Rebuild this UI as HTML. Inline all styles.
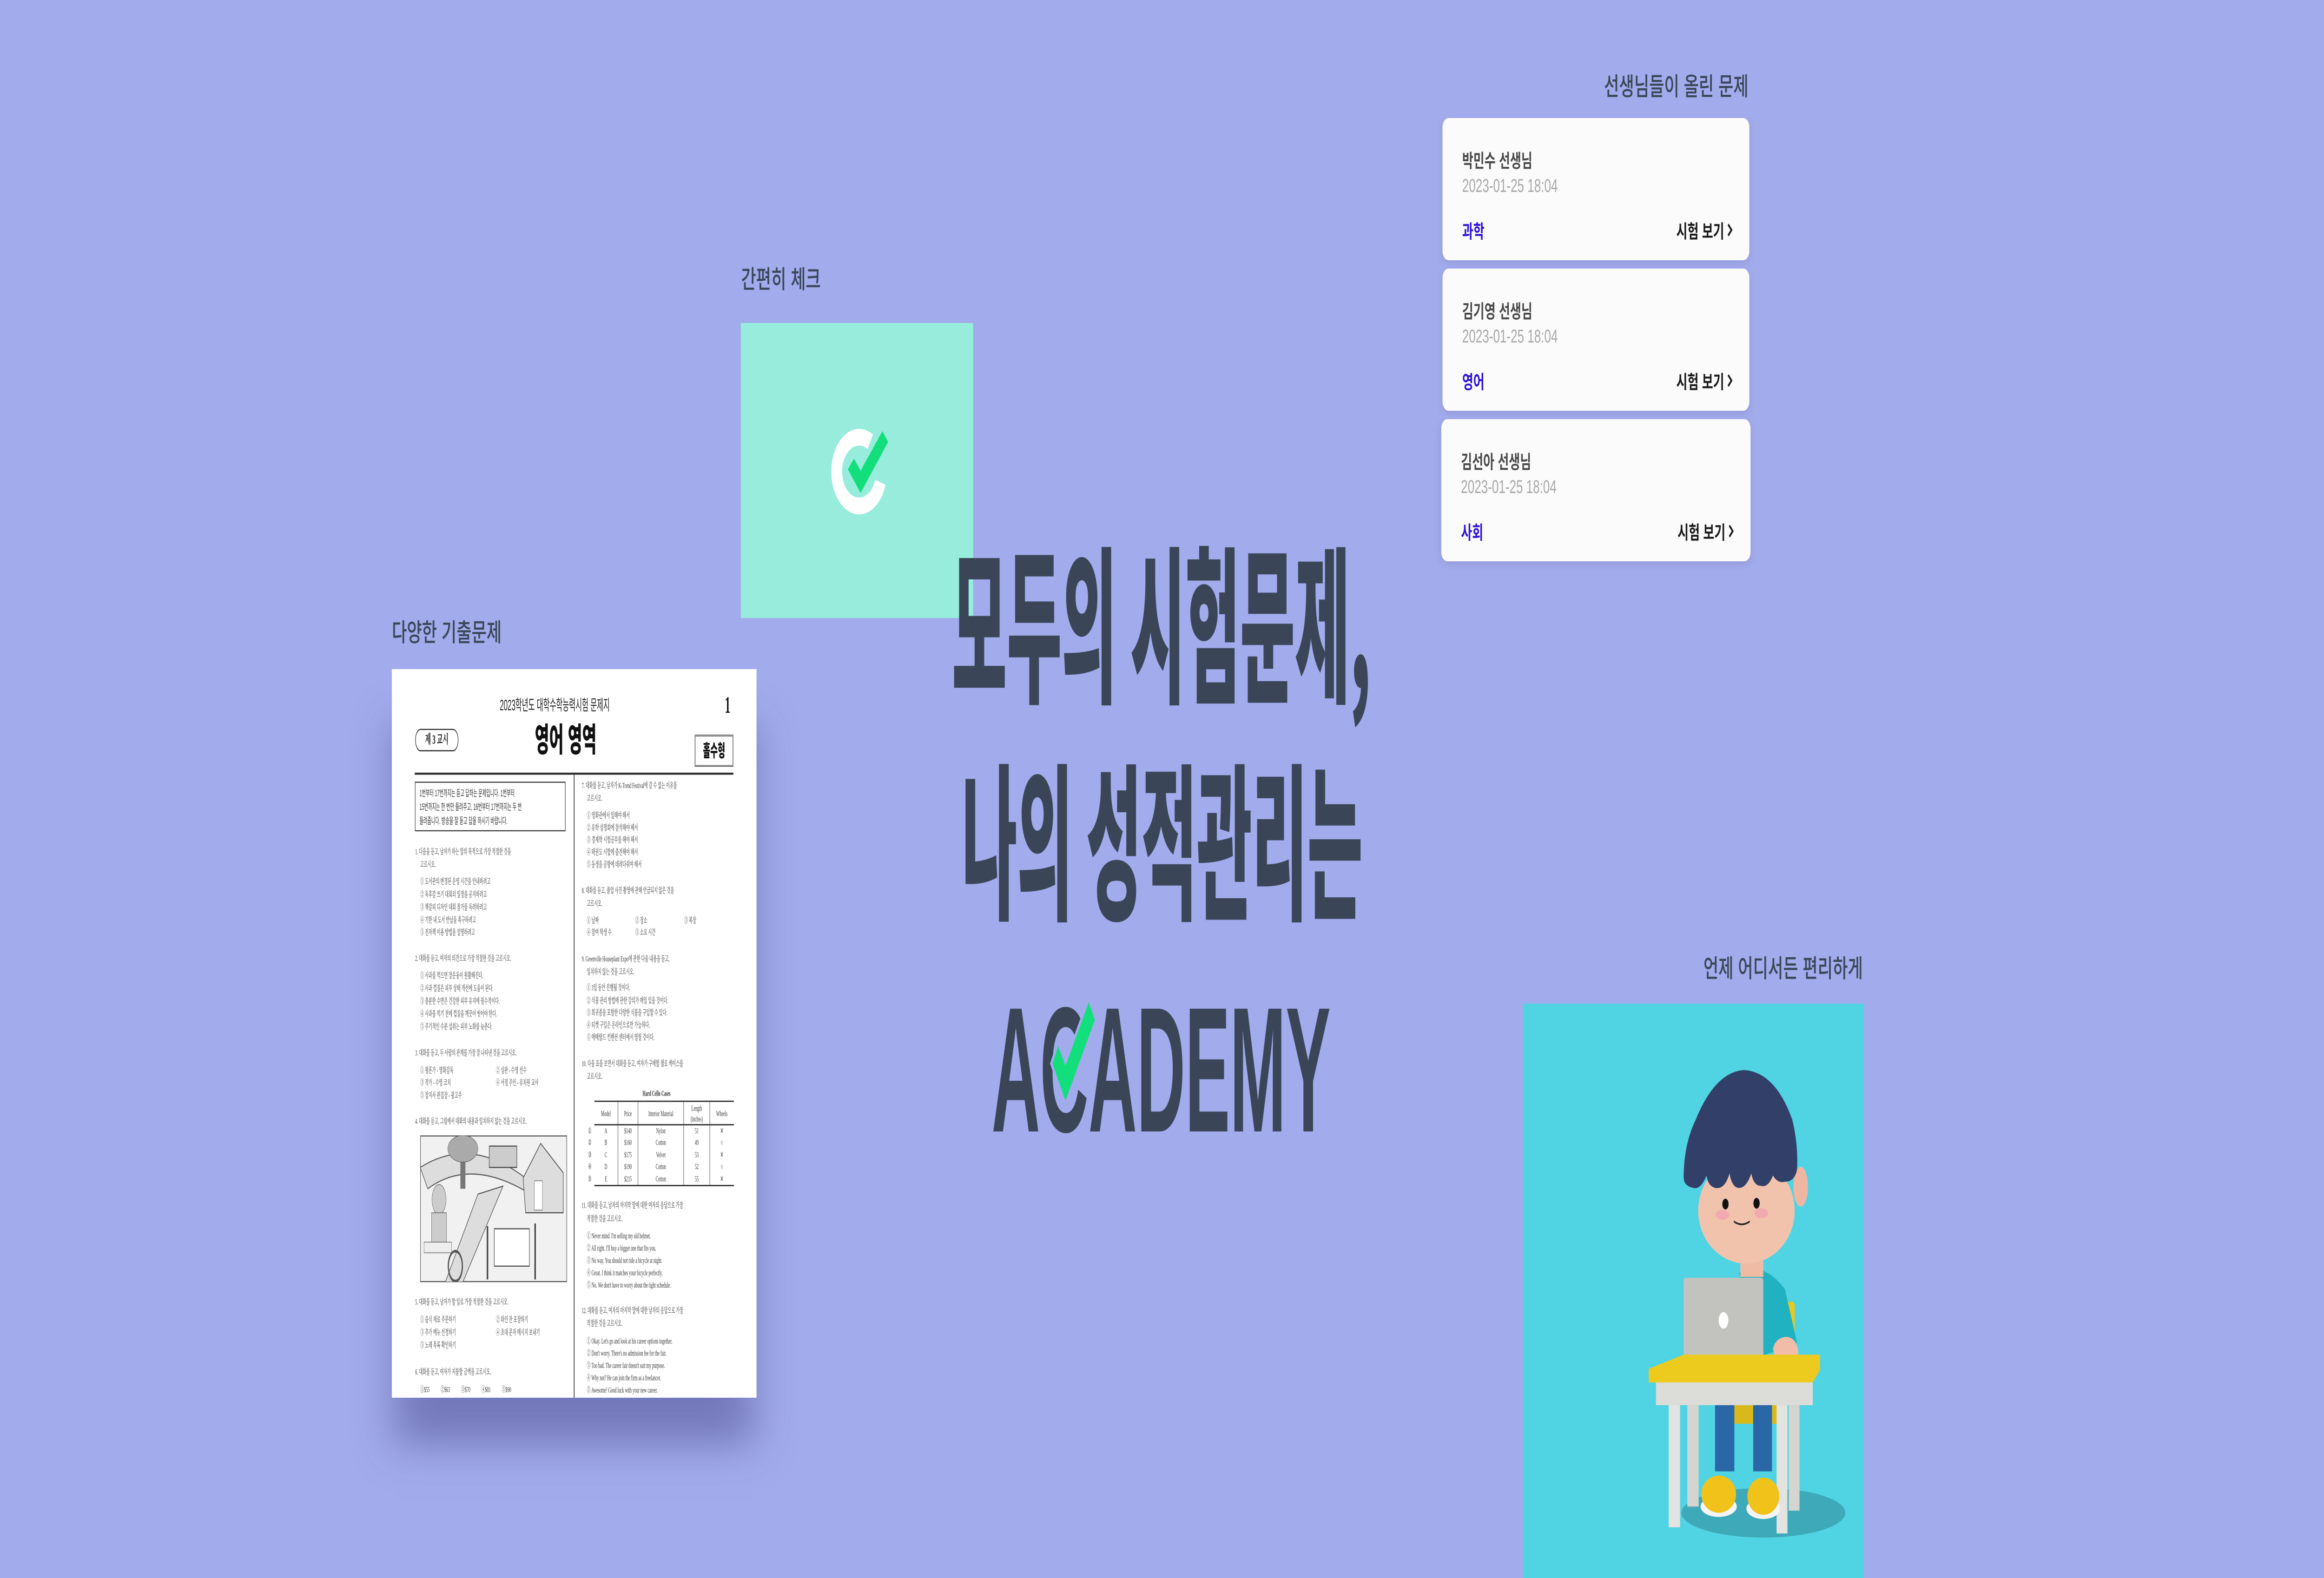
<!DOCTYPE html>
<html><head><meta charset="utf-8">
<style>
*{margin:0;padding:0;box-sizing:border-box}
html,body{width:100%;height:100%;overflow:hidden;background:#a2abeb}
#wrap{position:absolute;left:0;top:0;width:7680px;height:3396px;transform-origin:0 0;overflow:hidden;background:#a2abeb;font-family:"Liberation Sans","Noto Sans CJK KR",sans-serif}
.lbl{position:absolute;color:#3a4658;font-size:54px;font-weight:500;white-space:nowrap;line-height:1}
.card{position:absolute;left:4767px;width:1014px;height:306px;background:#fbfbfb;border-radius:20px;box-shadow:0 6px 18px rgba(90,90,150,.18)}
.card .n{position:absolute;left:65px;top:60px;font-size:40px;font-weight:700;color:#4a4a4a}
.card .d{position:absolute;left:65px;top:124px;font-size:40px;color:#a8a8a8}
.card .s{position:absolute;left:65px;top:212px;font-size:40px;font-weight:700;color:#2e12d6}
.card .v{position:absolute;right:55px;top:212px;font-size:40px;font-weight:700;color:#1a1a1a;display:flex;align-items:center;gap:10px}
#paper{position:absolute;left:1295px;top:1440px;width:1205px;height:1568px;background:#fff;box-shadow:0 110px 100px -10px rgba(70,72,140,.5);overflow:hidden}
#pin{position:absolute;left:0;top:0;width:1568px;height:1568px;transform-origin:0 0;transform:scale(0.8292,1.1482) translate(-55px,-122px);font-family:"Liberation Serif","Noto Serif CJK SC",serif;color:#333}
#pin div{position:absolute;white-space:nowrap;font-size:15px;line-height:20px}
</style></head><body>
<div id="wrap">
<div class="lbl" style="left:2449px;top:575px">간편히 체크</div>
<div style="position:absolute;left:2448px;top:695px;width:768px;height:635px;background:#97ecdc"></div>

<div class="lbl" style="left:1295px;top:1335px">다양한 기출문제</div>
<div class="lbl" style="right:1902px;top:160px">선생님들이 올린 문제</div>
<div class="lbl" style="right:1524px;top:2058px">언제 어디서든 편리하게</div>

<div class="card" style="top:254px"><div class="n">박민수 선생님</div><div class="d">2023-01-25 18:04</div><div class="s">과학</div><div class="v">시험 보기<svg width="18" height="30" viewBox="0 0 18 30"><path d="M3 3L14 15L3 27" stroke="#1a1a1a" stroke-width="5" fill="none"/></svg></div></div>
<div class="card" style="top:578px"><div class="n">김기영 선생님</div><div class="d">2023-01-25 18:04</div><div class="s">영어</div><div class="v">시험 보기<svg width="18" height="30" viewBox="0 0 18 30"><path d="M3 3L14 15L3 27" stroke="#1a1a1a" stroke-width="5" fill="none"/></svg></div></div>
<div class="card" style="top:902px;left:4763px;width:1022px"><div class="n">김선아 선생님</div><div class="d">2023-01-25 18:04</div><div class="s">사회</div><div class="v">시험 보기<svg width="18" height="30" viewBox="0 0 18 30"><path d="M3 3L14 15L3 27" stroke="#1a1a1a" stroke-width="5" fill="none"/></svg></div></div>

<div id="paper"><div id="pin">
<div style="left:485px;top:172px;font-family:'Liberation Sans','Noto Sans CJK KR',sans-serif;font-size:28px;line-height:36px;color:#222">2023학년도 대학수학능력시험 문제지</div>
<div style="left:1382px;top:165px;font-size:44px;line-height:50px;font-weight:700;color:#111">1</div>
<div style="left:625px;top:220px;font-family:'Liberation Sans','Noto Sans CJK KR',sans-serif;font-size:62px;line-height:72px;font-weight:900;color:#111">영어 영역</div>
<div style="left:148px;top:234px;width:172px;height:42px;border:2px solid #222;border-radius:21px;font-size:24px;line-height:38px;text-align:center;font-weight:700;color:#111">제 3 교시</div>
<div style="left:1262px;top:245px;width:154px;height:60px;border:3px double #222;font-family:'Liberation Sans','Noto Sans CJK KR',sans-serif;font-size:32px;line-height:54px;text-align:center;font-weight:900;color:#111">홀수형</div>
<div style="left:146px;top:316px;width:1270px;height:4px;background:#333"></div>
<div style="left:780px;top:320px;width:3px;height:1170px;background:#333"></div>
<div style="left:147px;top:333px;width:600px;height:93px;border:2px solid #333"></div>
<div style="left:165px;top:342px;font-family:'Liberation Sans','Noto Sans CJK KR',sans-serif;font-size:17px;line-height:26px">1번부터 17번까지는 듣고 답하는 문제입니다. 1번부터<br>15번까지는 한 번만 들려주고, 16번부터 17번까지는 두 번<br>들려줍니다. 방송을 잘 듣고 답을 하시기 바랍니다.</div>

<div style="left:148px;top:455px">1. 다음을 듣고, 남자가 하는 말의 목적으로 가장 적절한 것을</div>
<div style="left:168px;top:479px">고르시오.</div>
<div style="left:168px;top:511px">① 도서관의 변경된 운영 시간을 안내하려고</div>
<div style="left:168px;top:535px">② 독후감 쓰기 대회의 일정을 공지하려고</div>
<div style="left:168px;top:559px">③ 책갈피 디자인 대회 참가를 독려하려고</div>
<div style="left:168px;top:583px">④ 기한 내 도서 반납을 촉구하려고</div>
<div style="left:168px;top:606px">⑤ 전자책 이용 방법을 설명하려고</div>
<div style="left:148px;top:655px">2. 대화를 듣고, 여자의 의견으로 가장 적절한 것을 고르시오.</div>
<div style="left:168px;top:687px">① 사과를 먹으면 장운동이 원활해진다.</div>
<div style="left:168px;top:711px">② 사과 껍질은 피부 상태 개선에 도움이 된다.</div>
<div style="left:168px;top:735px">③ 충분한 수면은 건강한 피부 유지에 필수적이다.</div>
<div style="left:168px;top:759px">④ 사과를 먹기 전에 껍질을 깨끗이 씻어야 한다.</div>
<div style="left:168px;top:783px">⑤ 주기적인 수분 섭취는 피부 노화를 늦춘다.</div>
<div style="left:148px;top:832px">3. 대화를 듣고, 두 사람의 관계를 가장 잘 나타낸 것을 고르시오.</div>
<div style="left:168px;top:865px">① 평론가 - 영화감독</div><div style="left:470px;top:865px">② 심판 - 수영 선수</div>
<div style="left:168px;top:888px">③ 작가 - 수영 코치</div><div style="left:470px;top:888px">④ 서점 주인 - 유치원 교사</div>
<div style="left:168px;top:912px">⑤ 잡지사 편집장 - 광고주</div>
<div style="left:148px;top:960px">4. 대화를 듣고, 그림에서 대화의 내용과 일치하지 않는 것을 고르시오.</div>
<div style="left:168px;top:996px;width:585px;height:275px;border:2px solid #555;background:#f1f1f1"></div>
<svg style="position:absolute;left:168px;top:996px" width="585" height="275" viewBox="0 0 585 275">
<path d="M0 60 Q200 0 420 80 L440 110 Q200 40 30 100 Z" fill="#ddd" stroke="#555" stroke-width="2"/>
<path d="M100 275 L230 110 L330 95 L170 275 Z" fill="#ddd" stroke="#555" stroke-width="2"/>
<rect x="160" y="20" width="20" height="80" fill="#777"/><ellipse cx="170" cy="25" rx="60" ry="25" fill="#aaa" stroke="#555"/>
<rect x="275" y="20" width="110" height="40" fill="#ccc" stroke="#444" stroke-width="2"/>
<path d="M410 80 L480 15 L570 70 L570 145 L420 145 Z" fill="#ddd" stroke="#444" stroke-width="2"/>
<rect x="455" y="85" width="32" height="55" fill="#fff" stroke="#444"/>
<circle cx="75" cy="120" r="28" fill="#ccc" stroke="#444"/><rect x="45" y="145" width="60" height="70" fill="#ccc" stroke="#444"/>
<rect x="15" y="200" width="110" height="20" fill="#eee" stroke="#444"/>
<rect x="295" y="175" width="140" height="70" fill="#fff" stroke="#444" stroke-width="2"/>
<rect x="265" y="170" width="6" height="100" fill="#444"/><rect x="455" y="165" width="6" height="105" fill="#444"/>
<circle cx="140" cy="245" r="28" fill="none" stroke="#555" stroke-width="5"/>
</svg>
<div style="left:148px;top:1299px">5. 대화를 듣고, 남자가 할 일로 가장 적절한 것을 고르시오.</div>
<div style="left:168px;top:1332px">① 음식 재료 주문하기</div><div style="left:470px;top:1332px">② 와인 잔 포장하기</div>
<div style="left:168px;top:1356px">③ 추가 메뉴 선정하기</div><div style="left:470px;top:1356px">④ 초대 문자 메시지 보내기</div>
<div style="left:168px;top:1380px">⑤ 노래 목록 확인하기</div>
<div style="left:148px;top:1430px">6. 대화를 듣고, 여자가 지불할 금액을 고르시오.</div>
<div style="left:168px;top:1463px;word-spacing:40px">①$55 ②$63 ③$70 ④$81 ⑤$90</div>

<div style="left:812px;top:331px">7. 대화를 듣고, 남자가 K-Trend Festival에 갈 수 없는 이유를</div>
<div style="left:832px;top:355px">고르시오.</div>
<div style="left:832px;top:387px">① 영화관에서 일해야 해서</div>
<div style="left:832px;top:410px">② 유학 설명회에 참석해야 해서</div>
<div style="left:832px;top:433px">③ 경제학 시험공부를 해야 해서</div>
<div style="left:832px;top:456px">④ 태권도 시합에 출전해야 해서</div>
<div style="left:832px;top:479px">⑤ 동생을 공항에 데려다줘야 해서</div>
<div style="left:812px;top:528px">8. 대화를 듣고, 졸업 사진 촬영에 관해 언급되지 않은 것을</div>
<div style="left:832px;top:552px">고르시오.</div>
<div style="left:832px;top:584px">① 날짜</div><div style="left:1025px;top:584px">② 장소</div><div style="left:1220px;top:584px">③ 복장</div>
<div style="left:832px;top:606px">④ 참여 학생 수</div><div style="left:1025px;top:606px">⑤ 소요 시간</div>
<div style="left:812px;top:656px">9. Greenville Houseplant Expo에 관한 다음 내용을 듣고,</div>
<div style="left:832px;top:680px">일치하지 않는 것을 고르시오.</div>
<div style="left:832px;top:710px">① 3일 동안 진행될 것이다.</div>
<div style="left:832px;top:734px">② 식물 관리 방법에 관한 강의가 매일 있을 것이다.</div>
<div style="left:832px;top:757px">③ 희귀종을 포함한 다양한 식물을 구입할 수 있다.</div>
<div style="left:832px;top:780px">④ 티켓 구입은 온라인으로만 가능하다.</div>
<div style="left:832px;top:803px">⑤ 에메랄드 컨벤션 센터에서 열릴 것이다.</div>
<div style="left:812px;top:852px">10. 다음 표를 보면서 대화를 듣고, 여자가 구매할 첼로 케이스를</div>
<div style="left:832px;top:876px">고르시오.</div>
<div style="left:1054px;top:908px;font-weight:700">Hard Cello Cases</div>
<svg style="position:absolute;left:830px;top:930px" width="590" height="162" viewBox="0 0 590 162">
<g stroke="#333" fill="none" stroke-width="1.5"><path d="M32 2H588M32 46H588M32 160H588" stroke-width="2.5"/>
<path d="M126 2V160M206 2V160M388 2V160M492 2V160"/></g>
<g font-family="Liberation Serif" font-size="15" fill="#333" text-anchor="middle">
<text x="78" y="30">Model</text><text x="166" y="30">Price</text><text x="297" y="30">Interior Material</text><text x="440" y="20">Length</text><text x="440" y="40">(inches)</text><text x="540" y="30">Wheels</text>
<text x="14" y="62">①</text><text x="78" y="62">A</text><text x="166" y="62">$140</text><text x="297" y="62">Nylon</text><text x="440" y="62">51</text><text x="540" y="62">✕</text>
<text x="14" y="84">②</text><text x="78" y="84">B</text><text x="166" y="84">$160</text><text x="297" y="84">Cotton</text><text x="440" y="84">49</text><text x="540" y="84">○</text>
<text x="14" y="107">③</text><text x="78" y="107">C</text><text x="166" y="107">$175</text><text x="297" y="107">Velvet</text><text x="440" y="107">53</text><text x="540" y="107">✕</text>
<text x="14" y="129">④</text><text x="78" y="129">D</text><text x="166" y="129">$190</text><text x="297" y="129">Cotton</text><text x="440" y="129">52</text><text x="540" y="129">○</text>
<text x="14" y="152">⑤</text><text x="78" y="152">E</text><text x="166" y="152">$215</text><text x="297" y="152">Cotton</text><text x="440" y="152">55</text><text x="540" y="152">✕</text></g></svg>
<div style="left:812px;top:1118px">11. 대화를 듣고, 남자의 마지막 말에 대한 여자의 응답으로 가장</div>
<div style="left:832px;top:1143px">적절한 것을 고르시오.</div>
<div style="left:832px;top:1175px">① Never mind. I'm selling my old helmet.</div>
<div style="left:832px;top:1198px">② All right. I'll buy a bigger one that fits you.</div>
<div style="left:832px;top:1221px">③ No way. You should not ride a bicycle at night.</div>
<div style="left:832px;top:1244px">④ Great. I think it matches your bicycle perfectly.</div>
<div style="left:832px;top:1267px">⑤ No. We don't have to worry about the tight schedule.</div>
<div style="left:812px;top:1315px">12. 대화를 듣고, 여자의 마지막 말에 대한 남자의 응답으로 가장</div>
<div style="left:832px;top:1339px">적절한 것을 고르시오.</div>
<div style="left:832px;top:1372px">① Okay. Let's go and look at his career options together.</div>
<div style="left:832px;top:1395px">② Don't worry. There's no admission fee for the fair.</div>
<div style="left:832px;top:1418px">③ Too bad. The career fair doesn't suit my purpose.</div>
<div style="left:832px;top:1441px">④ Why not? He can join the firm as a freelancer.</div>
<div style="left:832px;top:1464px">⑤ Awesome! Good luck with your new career.</div>
</div></div>

<svg style="position:absolute;left:0;top:0" width="7680" height="3396" viewBox="0 0 7680 3396">
<circle cx="2839" cy="1015" r="74" fill="none" stroke="#fff" stroke-width="36" stroke-dasharray="364 1000" transform="rotate(18 2839 1015)"/>
<polygon points="2802,1010 2822,987 2844,1013 2916,928 2935,951 2844,1061" fill="#12df7c"/>
<g font-family="'Noto Sans CJK KR','Noto Sans CJK JP',sans-serif" font-weight="900" fill="#3a4658" font-size="362">
<text x="3146" y="1483" textLength="1384" lengthAdjust="spacingAndGlyphs">모두의 시험문제,</text>
<text x="3179" y="1950" textLength="1324" lengthAdjust="spacingAndGlyphs">나의 성적관리는</text>
</g>
<text x="3277" y="2435" font-family="'Liberation Sans',sans-serif" font-weight="700" font-size="384" fill="#3a4658" textLength="1120" lengthAdjust="spacingAndGlyphs">ACADEMY</text>
<polygon points="3478,2289 3497,2251 3521,2294 3598,2157 3618,2195 3521,2369" fill="#12df7c" stroke="#a2abeb" stroke-width="14" paint-order="stroke"/>

<rect x="5033" y="2160" width="1127" height="1236" fill="#50d4e4"/>
<g transform="matrix(0.7974,0,0,0.8905,4950,2000)">
<ellipse cx="1100" cy="1410" rx="340" ry="60" fill="#3eaab9"/>
<rect x="1160" y="900" width="70" height="110" rx="10" fill="#e8c81e"/>
<rect x="975" y="1150" width="190" height="45" fill="#d9b81c"/>
<path d="M1000 830 Q1100 800 1190 870 L1240 1000 L1100 1030 Z" fill="#21b2c2"/>
<rect x="1005" y="780" width="95" height="60" fill="#efbba5"/>
<ellipse cx="1255" cy="622" rx="30" ry="48" fill="#efb7a2"/>
<ellipse cx="1030" cy="680" rx="200" ry="128" fill="#f1c3ad"/>
<path d="M770 600 Q770 520 820 460 Q900 345 1020 340 Q1150 345 1220 460 Q1245 520 1240 580 Q1230 610 1190 610 Q1160 615 1140 595 Q1120 625 1090 620 Q1060 620 1050 590 Q1030 625 1000 625 Q970 625 960 590 Q940 630 900 625 Q870 620 865 595 Q840 630 810 625 Q770 620 770 600 Z" fill="#323f69"/>
<circle cx="943" cy="664" r="13" fill="#111"/><circle cx="1072" cy="662" r="13" fill="#111"/>
<ellipse cx="930" cy="690" rx="28" ry="12" fill="#f2a3b0" opacity=".8"/><ellipse cx="1092" cy="686" rx="28" ry="12" fill="#f2a3b0" opacity=".8"/>
<path d="M978 706 Q1010 720 1044 706" stroke="#222" stroke-width="4" fill="none"/>
<rect x="770" y="842" width="330" height="210" rx="8" fill="#c2c2bf"/>
<circle cx="935" cy="945" r="20" fill="#fff"/>
<path d="M1140 1015 Q1150 985 1200 985 Q1245 990 1245 1030 L1150 1035 Z" fill="#f1bda8"/>
<polygon points="625,1062 770,1028 1335,1028 1335,1065 1300,1100 625,1095" fill="#eccb1e"/>
<rect x="655" y="1095" width="650" height="55" fill="#dcdcd8"/>
<rect x="900" y="1150" width="80" height="160" fill="#2a67a6"/><rect x="1058" y="1150" width="78" height="160" fill="#2a67a6"/>
<rect x="708" y="1150" width="47" height="295" fill="#e3e3e0"/><rect x="785" y="1150" width="47" height="245" fill="#d4d4d0"/>
<rect x="1155" y="1150" width="45" height="310" fill="#e3e3e0"/><rect x="1205" y="1150" width="45" height="255" fill="#d4d4d0"/>
<ellipse cx="915" cy="1395" rx="75" ry="25" fill="#f4f4f4"/><ellipse cx="915" cy="1365" rx="72" ry="45" fill="#f0c21a"/>
<ellipse cx="1100" cy="1400" rx="70" ry="25" fill="#f4f4f4"/><ellipse cx="1100" cy="1370" rx="66" ry="45" fill="#f0c21a"/>
</g>
</svg>
</div>
<script>
(function(){
  function fit(){
    var w=document.documentElement.clientWidth||window.innerWidth;
    var h=document.documentElement.clientHeight||window.innerHeight;
    var sx=w/7680, sy=h/3396;
    if(!isFinite(sx)||sx<=0) sx=1;
    if(!isFinite(sy)||sy<=0) sy=1;
    document.getElementById('wrap').style.transform='scale('+sx+','+sy+')';
  }
  fit(); window.addEventListener('resize',fit);
})();
</script>
</body></html>
